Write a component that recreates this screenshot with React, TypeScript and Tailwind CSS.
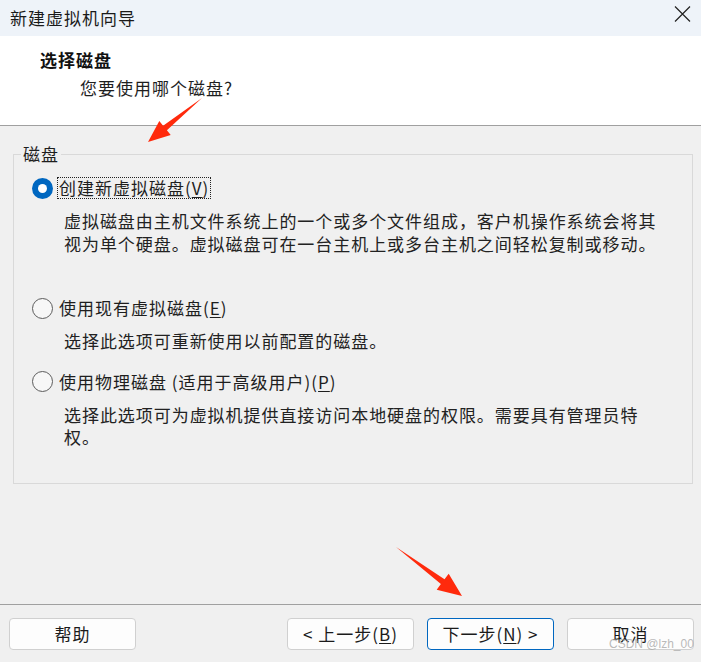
import React from 'react';

const font = "font-['Noto_Sans_CJK_SC',sans-serif]";

type Option = {
  label: string;
  key: string;
  desc: string;
  checked: boolean;
  gap: string;
};

const options: Option[] = [
  {
    label: '创建新虚拟磁盘',
    key: 'V',
    desc: '虚拟磁盘由主机文件系统上的一个或多个文件组成，客户机操作系统会将其视为单个硬盘。虚拟磁盘可在一台主机上或多台主机之间轻松复制或移动。',
    checked: true,
    gap: '',
  },
  {
    label: '使用现有虚拟磁盘',
    key: 'E',
    desc: '选择此选项可重新使用以前配置的磁盘。',
    checked: false,
    gap: 'mt-[41px]',
  },
  {
    label: '使用物理磁盘 (适用于高级用户)',
    key: 'P',
    desc: '选择此选项可为虚拟机提供直接访问本地硬盘的权限。需要具有管理员特权。',
    checked: false,
    gap: 'mt-[17px]',
  },
];

function Radio({ checked }: { checked: boolean }) {
  if (checked) {
    return (
      <span className="w-[21px] h-[21px] rounded-full bg-[#0067c0] flex items-center justify-center shrink-0">
        <span className="w-[9px] h-[9px] rounded-full bg-white" />
      </span>
    );
  }
  return <span className="w-[21px] h-[21px] rounded-full border border-[#5c5c5c] bg-[#f7f7f7] shrink-0" />;
}

function Button({ children, primary }: { children: React.ReactNode; primary?: boolean }) {
  return (
    <button
      className={`h-[32px] w-[127px] rounded-[4px] bg-[#fdfdfd] text-[17px] text-[#1b1b1b] tracking-[1px] flex items-center justify-center ${
        primary ? 'border border-[#0067c0]' : 'border border-[#d0d0d0]'
      }`}
    >
      {children}
    </button>
  );
}

export default function App() {
  return (
    <div className={`relative w-[701px] h-[662px] bg-[#f0f0f0] overflow-hidden flex flex-col ${font} text-[#1e1e1e]`}>
      {/* title bar */}
      <div className="h-[36px] bg-[#eef3f9] flex items-center justify-between pl-[10px] pr-[10px] shrink-0">
        <span className="text-[17px] tracking-[1px] text-[#1a1a1a]">新建虚拟机向导</span>
        <svg width="17" height="16" viewBox="0 0 17 16" className="mt-[-8px]">
          <path d="M1 0.5 L16 15.5 M16 0.5 L1 15.5" stroke="#222" strokeWidth="1.2" fill="none" />
        </svg>
      </div>

      {/* header */}
      <div className="h-[90px] bg-white border-b border-[#a0a0a0] shrink-0 pt-[13px]">
        <div className="pl-[40px] text-[17px] font-bold tracking-[1px] leading-[22px] text-[#111]">选择磁盘</div>
        <div className="pl-[80px] mt-[6px] text-[17px] tracking-[1px] leading-[22px]">您要使用哪个磁盘?</div>
      </div>

      {/* body */}
      <div className="h-[478px] shrink-0 pt-[16px] pl-[13px]">
        <fieldset className="w-[680px] h-[342px] border border-[#d9d9d9] pl-[18px]">
          <legend className="ml-[-11px] px-[2px] text-[17px] leading-[24px] tracking-[1px]">磁盘</legend>
          <div className="pt-[10px]">
            {options.map((o) => (
              <div key={o.key} className={o.gap}>
                <div className="flex items-center h-[24px]">
                  <Radio checked={o.checked} />
                  <span
                    className={`ml-[5px] px-[1px] text-[17px] leading-[20px] tracking-[1px] ${
                      o.checked ? 'outline outline-1 outline-dotted outline-[#222]' : ''
                    }`}
                  >
                    {o.label}(<span className="underline underline-offset-2">{o.key}</span>)
                  </span>
                </div>
                <p className="mt-[10px] ml-[32px] w-[602px] text-[17px] leading-[22.5px] tracking-[0.95px] text-[#222]">
                  {o.desc}
                </p>
              </div>
            ))}
          </div>
        </fieldset>
      </div>

      {/* footer */}
      <div className="flex-1 border-t border-[#a0a0a0] flex items-start pt-[13px] pl-[9px] pr-[7px]">
        <Button>帮助</Button>
        <div className="flex-1" />
        <div className="flex gap-[13px]">
          <Button>
            &lt; 上一步(<span className="underline underline-offset-2">B</span>)
          </Button>
          <Button primary>
            下一步(<span className="underline underline-offset-2">N</span>) &gt;
          </Button>
          <Button>取消</Button>
        </div>
      </div>

      {/* watermark */}
      <span className="absolute left-[609px] top-[635px] text-[12px] text-[#a8a8a8]/80 font-['Liberation_Sans',sans-serif]">
        CSDN @lzh_00
      </span>

      {/* annotation arrows */}
      <svg className="absolute inset-0 pointer-events-none" width="701" height="662">
        <polygon
          points="202,98 166.9,130.3 170.7,134.9 148,142 159.3,121.1 163.1,125.7"
          fill="#ff2a0c"
        />
        <polygon
          points="396,547 444.5,579.3 448.7,573.7 462,596 436.7,589.7 440.9,584.1"
          fill="#ff2a0c"
        />
      </svg>
    </div>
  );
}
